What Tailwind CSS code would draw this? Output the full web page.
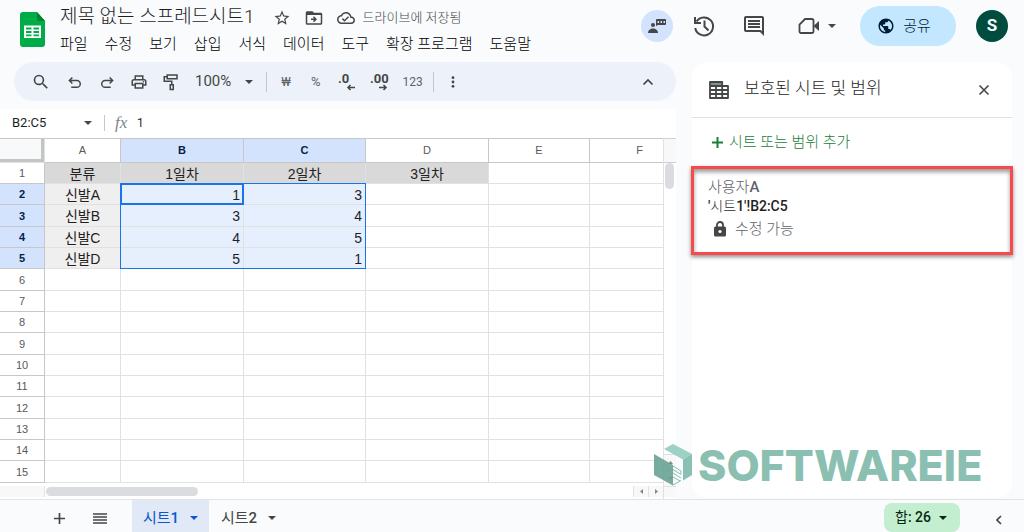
<!DOCTYPE html>
<html lang="ko">
<head>
<meta charset="utf-8">
<meta name="viewport" content="width=device-width, initial-scale=1">
<title>제목 없는 스프레드시트1</title>
<script src="https://cdn.jsdelivr.net/npm/@tailwindcss/browser@4"></script>
</head>
<body class="flex h-screen flex-col overflow-hidden bg-[#f9fbfd] font-['Roboto','Noto_Sans_CJK_KR',sans-serif] text-[#444746]">

<header class="flex h-[62px] shrink-0 items-start pl-5 pr-4">
  <a href="#" aria-label="스프레드시트 홈" class="mt-3 shrink-0">
    <svg class="h-[35px] w-[25px]" viewBox="0 0 25 35"><path fill="#00ac47" d="M3 0h14l8 9v23a3 3 0 0 1-3 3H3a3 3 0 0 1-3-3V3a3 3 0 0 1 3-3z"/><path fill="#00832d" d="M17 0l8 9h-6a2 2 0 0 1-2-2z"/><path fill="#fff" fill-rule="evenodd" d="M4 13.500h17v12.500H4zM6 15.500v2h5.500v-2zm7.500 0v2H19v-2zM6 19v2h5.500v-2zm7.500 0v2H19v-2zM6 22.500v1.700h5.500v-1.700zm7.500 0v1.700H19v-1.700z"/></svg>
  </a>
  <div class="flex flex-col pl-[15px]">
    <div class="flex h-8 items-center">
      <h1 class="whitespace-nowrap pt-[2px] text-[19px] font-light leading-8 text-[#1f1f1f]">제목 없는 스프레드시트1</h1>
      <div class="flex items-center gap-[14px] pl-[18px] pt-1">
        <button aria-label="별표"><svg class="size-[18px]" viewBox="0 0 24 24" fill="currentColor"><path d="M22 9.240l-7.190-.62L12 2 9.190 8.630 2 9.240l5.460 4.730L5.820 21 12 17.270 18.180 21l-1.630-7.030L22 9.240zM12 15.400l-3.760 2.270 1-4.280-3.320-2.880 4.380-.38L12 6.100l1.710 4.040 4.380.38-3.320 2.880 1 4.280L12 15.400z"/></svg></button>
        <button aria-label="이동"><svg class="size-[18px]" viewBox="0 0 24 24" fill="currentColor"><path d="M21 5h-9l-2-2H3c-1.100 0-2 .9-2 2v14c0 1.100.9 2 2 2h18c1.100 0 2-.9 2-2V7c0-1.100-.9-2-2-2zm0 14H3V8h18v11zm-9-1.500l4-4-4-4-1.400 1.400 1.600 1.600H8v2h4.200l-1.600 1.600z"/></svg></button>
        <button class="flex items-center gap-2 whitespace-nowrap text-[13px] font-light"><svg class="size-[18px]" viewBox="0 0 24 24" fill="currentColor"><path d="M19.350 10.040C18.670 6.590 15.640 4 12 4 9.110 4 6.600 5.640 5.350 8.040 2.340 8.360 0 10.910 0 14c0 3.310 2.690 6 6 6h13c2.760 0 5-2.240 5-5 0-2.640-2.050-4.780-4.650-4.960zM19 18H6c-2.210 0-4-1.790-4-4 0-2.050 1.530-3.760 3.560-3.970l1.070-.11.5-.95C8.080 7.140 9.940 6 12 6c2.620 0 4.880 1.860 5.390 4.430l.3 1.500 1.530.11c1.560.1 2.780 1.410 2.780 2.960 0 1.650-1.350 3-3 3zm-9-3.820l-2.090-2.090L6.500 13.500 10 17l6.010-6.010-1.410-1.410z"/></svg>드라이브에 저장됨</button>
      </div>
    </div>
    <nav class="flex h-6 items-center gap-[17px] whitespace-nowrap text-[15px] font-light text-black">
      <button>파일</button><button>수정</button><button>보기</button><button>삽입</button><button>서식</button><button>데이터</button><button>도구</button><button>확장 프로그램</button><button>도움말</button>
    </nav>
  </div>
  <div class="ml-auto flex items-center pt-[6px]">
    <button aria-label="접속자" class="flex size-8 items-center justify-center rounded-full bg-[#d3e3fd]">
      <svg class="h-4 w-5" viewBox="0 0 20 16" fill="currentColor"><circle cx="6" cy="7" r="2"/><path d="M1 15c0-3 2.500-4.500 5-4.500s5 1.500 5 4.500z"/><path fill-rule="evenodd" d="M10 1h8a1 1 0 0 1 1 1v4a1 1 0 0 1-1 1h-7l-2 1V2a1 1 0 0 1 1-1zM10.500 3v2h1.500V3zm3 0v2H15V3zm3 0v2H18V3z"/></svg>
    </button>
    <button aria-label="기록" class="ml-[19px]"><svg class="size-6" viewBox="0 0 24 24" fill="none" stroke="currentColor" stroke-width="2"><path d="M4.500 7.500A9 9 0 1 1 3.200 14M3 3v6h6M12.500 6.500v6l4 4"/></svg></button>
    <button aria-label="댓글" class="ml-[26px]"><svg class="size-6" viewBox="0 0 24 24" fill="currentColor"><path d="M22 4c0-1.100-.9-2-2-2H4c-1.100 0-2 .9-2 2v12c0 1.100.9 2 2 2h14l4 4V4zm-2 13.200L18.800 16H4V4h16v13.200zM6 12h12v2H6zm0-3h12v2H6zm0-3h12v2H6z"/></svg></button>
    <button aria-label="화상 회의" class="ml-8 flex items-center gap-2"><svg class="h-5 w-[22px]" viewBox="0 0 22 20" fill="none" stroke="currentColor" stroke-width="1.800"><path d="M7 3h7a1.500 1.500 0 0 1 1.500 1.500v11a1.500 1.500 0 0 1-1.500 1.500H3a1.500 1.500 0 0 1-1.500-1.500V8.500z"/><path d="M15.500 10l5.500-5v10z" fill="currentColor" stroke="none"/></svg><svg class="h-1 w-2" viewBox="0 0 8 4" fill="currentColor"><path d="M0 0h8L4 4z"/></svg></button>
    <button class="ml-6 flex h-10 w-24 items-center justify-center gap-2 rounded-full bg-[#c2e7ff] pr-2 text-[15px] font-light text-[#001d35]"><svg class="size-[18px]" viewBox="0 0 24 24" fill="currentColor"><path d="M12 2C6.480 2 2 6.480 2 12s4.480 10 10 10 10-4.480 10-10S17.520 2 12 2zm-1 17.930c-3.950-.49-7-3.850-7-7.930 0-.62.080-1.210.21-1.790L9 15v1c0 1.100.9 2 2 2v1.930zm6.900-2.540c-.26-.81-1-1.390-1.900-1.390h-1v-3c0-.55-.45-1-1-1H8v-2h2c.55 0 1-.45 1-1V7h2c1.100 0 2-.9 2-2v-.41c2.930 1.190 5 4.060 5 7.410 0 2.080-.8 3.970-2.100 5.390z"/></svg>공유</button>
    <button aria-label="계정" class="ml-5 size-8 rounded-full bg-[#004d40] text-[17px] font-bold text-white">S</button>
  </div>
</header>

<main class="flex min-h-0 flex-1 gap-4 pr-3">
  <section class="flex min-w-0 flex-1 flex-col">
    <div class="ml-[14px] flex h-[39px] shrink-0 items-center rounded-full bg-[#edf2fa] pl-[18px] pr-5">
      <button aria-label="검색"><svg class="size-[18px]" viewBox="0 0 24 24" fill="currentColor"><path d="M15.500 14h-.79l-.28-.27A6.470 6.470 0 0 0 16 9.500 6.500 6.500 0 1 0 9.500 16c1.610 0 3.090-.59 4.230-1.570l.27.28v.79l5 5L20.500 19l-5-5zm-6 0a4.500 4.500 0 1 1 0-9 4.500 4.500 0 0 1 0 9z" transform="translate(-1 -1) scale(1.080)"/></svg></button>
      <button aria-label="실행취소" class="ml-4"><svg class="size-[18px]" viewBox="0 0 24 24" fill="none" stroke="currentColor" stroke-width="2"><path d="M8.500 6L4.500 10l4 4M4.500 10H14.500a4.500 4.500 0 0 1 0 9H7"/></svg></button>
      <button aria-label="재실행" class="ml-[14px]"><svg class="size-[18px]" viewBox="0 0 24 24" fill="none" stroke="currentColor" stroke-width="2"><path d="M15.500 6l4 4-4 4M19.500 10H9.500a4.500 4.500 0 0 0 0 9H17"/></svg></button>
      <button aria-label="인쇄" class="ml-[14px]"><svg class="size-[18px]" viewBox="0 0 24 24" fill="currentColor"><path d="M19 8h-1V3H6v5H5c-1.660 0-3 1.340-3 3v6h4v4h12v-4h4v-6c0-1.660-1.340-3-3-3zM8 5h8v3H8V5zm8 14H8v-4h8v4zm2-4v-2H6v2H4v-4c0-.55.45-1 1-1h14c.55 0 1 .45 1 1v4h-2z"/><circle cx="18" cy="11.500" r="1"/></svg></button>
      <button aria-label="서식 복사" class="ml-[14px]"><svg class="size-[18px]" viewBox="0 0 24 24" fill="none" stroke="currentColor" stroke-width="2"><path d="M7 2.500h13v5H7zM7 5H3v6h10v4M11 15.500h4V22h-4z"/></svg></button>
      <button class="ml-[15px] flex items-center gap-[14px] text-[15px]">100% <svg class="h-1 w-2" viewBox="0 0 8 4" fill="currentColor"><path d="M0 0h8L4 4z"/></svg></button>
      <span class="ml-[13px] h-5 w-px bg-[#c7c7c7]"></span>
      <button aria-label="통화 형식" class="ml-[14px] text-[13px] text-[#5f6368]">₩</button>
      <button aria-label="퍼센트 형식" class="ml-5 text-[13px] text-[#5f6368]">%</button>
      <button aria-label="소수점 이하 자릿수 감소" class="ml-[18px]"><svg class="h-5 w-[18px]" viewBox="0 0 18 20"><text x="0" y="11" font-size="13" font-weight="700" fill="currentColor">.0</text><path d="M17 15.500h-7M12.500 13l-2.500 2.500 2.500 2.500" fill="none" stroke="currentColor" stroke-width="1.500"/></svg></button>
      <button aria-label="소수점 이하 자릿수 증가" class="ml-[14px]"><svg class="h-5 w-[19px]" viewBox="0 0 19 20"><text x="0" y="11" font-size="13" font-weight="700" fill="currentColor">.00</text><path d="M9 15.500h7M13.500 13l2.500 2.500-2.500 2.500" fill="none" stroke="currentColor" stroke-width="1.500"/></svg></button>
      <button class="ml-[13px] text-[12px] text-[#5f6368]">123</button>
      <span class="ml-[10px] h-5 w-px bg-[#c7c7c7]"></span>
      <button aria-label="더보기" class="ml-[17px]"><svg class="h-3 w-1" viewBox="0 0 4 12" fill="currentColor"><circle cx="2" cy="1.700" r="1.400"/><circle cx="2" cy="6" r="1.400"/><circle cx="2" cy="10.300" r="1.400"/></svg></button>
      <button aria-label="메뉴 숨기기" class="ml-auto"><svg class="h-4 w-4" viewBox="0 0 16 16" fill="none" stroke="currentColor" stroke-width="1.700"><path d="M3.500 10.500L8 6l4.500 4.500"/></svg></button>
    </div>

    <div class="mt-2 flex h-[29px] shrink-0 items-center bg-white pl-3 pb-[2px] text-[#1f1f1f]">
      <input aria-label="이름 상자" value="B2:C5" class="w-[72px] text-[13px] outline-none">
      <button aria-label="범위 목록"><svg class="h-1 w-2" viewBox="0 0 8 4" fill="#444746"><path d="M0 0h8L4 4z"/></svg></button>
      <span class="ml-3 h-4 w-px bg-[#c7c7c7]"></span>
      <label for="formula" class="ml-[10px] w-[22px] font-['Liberation_Serif',serif] text-[17px] italic text-[#80868b]">fx</label>
      <input id="formula" value="1" class="min-w-0 flex-1 text-[12px] outline-none">
    </div>

    <div class="flex min-h-0 flex-1 bg-white">
      <div class="flex min-w-0 flex-1 flex-col">
        <div class="relative min-h-0 flex-1 overflow-hidden">
          <table class="w-[690px] table-fixed border-separate border-spacing-0 border-t border-[#c7c7c7] text-center font-['Liberation_Sans','Noto_Sans_CJK_KR',sans-serif] text-[14px] leading-4 text-[#1f1f1f] [&_td]:border-b [&_td]:border-r [&_td]:border-[#e1e1e1] [&_td]:p-0 [&_th]:border-b [&_th]:border-r [&_th]:border-[#c7c7c7] [&_th]:p-0 [&_th]:text-[11px] [&_tbody_th]:font-normal">
            <colgroup><col class="w-[45px]"><col class="w-[76px]"><col class="w-[123px]"><col class="w-[122px]"><col class="w-[123px]"><col class="w-[101px]"><col></colgroup>
            <thead><tr class="h-6 text-[#575a5a] [&>th]:pb-[2px] [&>th]:font-normal">
              <td class="bg-[#f8f9fa] shadow-[inset_-3px_-3px_#c4c4c4]"></td><th scope="col">A</th><th scope="col" class="bg-[#d3e3fd] text-[#041e49]"><b class="font-bold">B</b></th><th scope="col" class="bg-[#d3e3fd] text-[#041e49]"><b class="font-bold">C</b></th><th scope="col">D</th><th scope="col">E</th><th scope="col">F</th>
            </tr></thead>
            <tbody class="[&>tr]:h-[21px] [&>tr:nth-child(3n)]:h-[22px] [&_td]:pt-px [&_th]:text-[#575a5a]">
              <tr><th scope="row">1</th><td class="bg-[#d9d9d9]">분류</td><td class="bg-[#d9d9d9]">1일차</td><td class="bg-[#d9d9d9]">2일차</td><td class="bg-[#d9d9d9]">3일차</td><td></td><td></td></tr>
              <tr><th scope="row" class="bg-[#d3e3fd]"><b class="font-bold text-[#041e49]">2</b></th><td class="bg-[#efefef]">신발A</td><td class="bg-[#e6effd] text-right"><span class="pr-[3px]">1</span></td><td class="bg-[#e6effd] text-right"><span class="pr-[3px]">3</span></td><td></td><td></td><td></td></tr>
              <tr><th scope="row" class="bg-[#d3e3fd]"><b class="font-bold text-[#041e49]">3</b></th><td class="bg-[#efefef]">신발B</td><td class="bg-[#e6effd] text-right"><span class="pr-[3px]">3</span></td><td class="bg-[#e6effd] text-right"><span class="pr-[3px]">4</span></td><td></td><td></td><td></td></tr>
              <tr><th scope="row" class="bg-[#d3e3fd]"><b class="font-bold text-[#041e49]">4</b></th><td class="bg-[#efefef]">신발C</td><td class="bg-[#e6effd] text-right"><span class="pr-[3px]">4</span></td><td class="bg-[#e6effd] text-right"><span class="pr-[3px]">5</span></td><td></td><td></td><td></td></tr>
              <tr><th scope="row" class="bg-[#d3e3fd]"><b class="font-bold text-[#041e49]">5</b></th><td class="bg-[#efefef]">신발D</td><td class="bg-[#e6effd] text-right"><span class="pr-[3px]">5</span></td><td class="bg-[#e6effd] text-right"><span class="pr-[3px]">1</span></td><td></td><td></td><td></td></tr>
              <tr><th scope="row">6</th><td></td><td></td><td></td><td></td><td></td><td></td></tr>
              <tr><th scope="row">7</th><td></td><td></td><td></td><td></td><td></td><td></td></tr>
              <tr><th scope="row">8</th><td></td><td></td><td></td><td></td><td></td><td></td></tr>
              <tr><th scope="row">9</th><td></td><td></td><td></td><td></td><td></td><td></td></tr>
              <tr><th scope="row">10</th><td></td><td></td><td></td><td></td><td></td><td></td></tr>
              <tr><th scope="row">11</th><td></td><td></td><td></td><td></td><td></td><td></td></tr>
              <tr><th scope="row">12</th><td></td><td></td><td></td><td></td><td></td><td></td></tr>
              <tr><th scope="row">13</th><td></td><td></td><td></td><td></td><td></td><td></td></tr>
              <tr><th scope="row">14</th><td></td><td></td><td></td><td></td><td></td><td></td></tr>
              <tr><th scope="row">15</th><td></td><td></td><td></td><td></td><td></td><td></td></tr>
            </tbody>
          </table>
          <div class="absolute left-[120px] top-[45px] h-[86px] w-[246px] border border-[#1a73e8]"></div>
          <div class="absolute left-[120px] top-[45px] h-[22px] w-[124px] border-2 border-[#1a73e8]"></div>
        </div>
        <div class="flex h-[13px] shrink-0 items-center pb-[2px]">
          <span class="h-full w-[45px] border-r border-[#e1e1e1] bg-[#f8f8f8]"></span>
          <span class="ml-px h-[9px] w-[152px] rounded-full bg-[#dadce0]"></span>
          <div class="ml-auto flex h-full text-[#80868b]">
            <button aria-label="왼쪽으로" class="flex w-4 items-center justify-center border-x border-[#e1e1e1] bg-[#f8f8f8]"><svg class="h-[5px] w-[3px]" viewBox="0 0 3 5" fill="currentColor"><path d="M3 0v5L0 2.500z"/></svg></button>
            <button aria-label="오른쪽으로" class="flex w-[14px] items-center justify-center bg-[#f8f8f8]"><svg class="h-[5px] w-[3px]" viewBox="0 0 3 5" fill="currentColor"><path d="M0 0v5l3-2.500z"/></svg></button>
          </div>
        </div>
      </div>
      <div class="flex w-[13px] shrink-0 flex-col items-center border-l border-[#e1e1e1]">
        <span class="h-[25px] w-full border-y border-[#d0d0d0] bg-[#f8f8f8]"></span>
        <span class="mr-[2px] h-[26px] w-[9px] rounded-full bg-[#dadce0]"></span>
        <div class="mt-auto flex w-full flex-col pb-[2px] text-[#80868b]">
          <button aria-label="위로" class="flex h-4 items-center justify-center border-t border-[#e1e1e1] bg-[#f8f8f8]"><svg class="h-[3px] w-[5px]" viewBox="0 0 5 3" fill="currentColor"><path d="M0 3h5L2.500 0z"/></svg></button>
          <button aria-label="아래로" class="flex h-4 items-center justify-center border-t border-[#e1e1e1] bg-[#f8f8f8]"><svg class="h-[3px] w-[5px]" viewBox="0 0 5 3" fill="currentColor"><path d="M0 0h5L2.500 3z"/></svg></button>
          <span class="h-[11px] border-t border-[#e1e1e1] bg-[#f8f8f8]"></span>
        </div>
      </div>
    </div>
  </section>

  <aside class="relative mb-px flex w-80 shrink-0 flex-col rounded-2xl bg-white">
    <div class="flex h-14 shrink-0 items-center border-b border-[#e1e1e1] pl-[17px] pr-[22px]">
      <svg class="h-[18px] w-5" viewBox="0 0 20 18" fill="none" stroke="currentColor" stroke-width="1.800"><path d="M1 1h12v3H1z" fill="#7b9484" stroke="none"/><path d="M1 1h12.200M1 5h18M1 9h18M1 13h18M1 17h18M1 .2v17.600M7 5v12M13.200.2V17M19 4.200v13.600"/></svg>
      <h2 class="ml-[15px] pb-[2px] text-[17px] font-light text-[#1f1f1f]">보호된 시트 및 범위</h2>
      <button aria-label="닫기" class="ml-auto"><svg class="size-3" viewBox="0 0 12 12" fill="none" stroke="currentColor" stroke-width="1.600"><path d="M1.500 1.500l9 9M10.500 1.500l-9 9"/></svg></button>
    </div>
    <button class="ml-5 flex h-12 shrink-0 items-center gap-[6px] self-start text-[15px] font-light text-[#188038]"><svg class="size-[11px]" viewBox="0 0 11 11" stroke="currentColor" stroke-width="2"><path d="M5.500 0v11M0 5.500h11"/></svg>시트 또는 범위 추가</button>
    <div class="-mx-px h-[89px] shrink-0 border-[3px] border-[#f84a4a] pl-[14px] pt-[9px] text-[14px] leading-[19px] text-[#5f6368] shadow-[0_2px_4px_rgba(0,0,0,0.45),inset_0_3px_4px_rgba(0,0,0,0.4)]">
      <p class="text-[15px] font-light">사용자<b class="font-medium">A</b></p>
      <p class="font-medium text-[#1f1f1f]">'<span class="font-light">시트</span>1'!B2:C5</p>
      <p class="flex h-[26px] items-center gap-[9px] pl-[6px] text-[15px] font-light"><svg class="h-4 w-3" viewBox="0 0 12 16" fill="none"><path d="M3 6V4a3 3 0 0 1 6 0v2" stroke="#444746" stroke-width="1.800"/><rect y="5.500" width="12" height="10" rx="1.500" fill="#444746"/><circle cx="6" cy="10.500" r="1.600" fill="#fff"/></svg>수정 가능</p>
    </div>
    <div class="absolute bottom-2 -left-[38px] flex items-center gap-[6px] whitespace-nowrap font-['Inter',sans-serif] text-[43px] font-extrabold leading-[50px] text-[#8abfb2]">
      <svg class="h-[42px] w-[38px] opacity-90" viewBox="0 0 38 42"><path fill="#92cdbf" d="M10 5L19 0l19 10-9 5.500z"/><path fill="#6aa395" d="M0 10l19 11v20.500L0 31z"/><path fill="#7eb9ab" d="M38 10v21l-9 5.500V15.500z"/><path fill="none" stroke="#7eb9ab" d="M19 22l8 5v3M19 25.500l8 5M19 29l8 5M19 33l7 4M19 41l8-4.500"/></svg>
      <span>SOFTWAREIE</span>
    </div>
  </aside>
</main>

<footer class="flex h-[33px] shrink-0 items-center border-t border-[#e1e3e6] pr-[22px]">
  <button aria-label="시트 추가" class="ml-[54px] mt-1"><svg class="size-[11px]" viewBox="0 0 11 11" stroke="currentColor" stroke-width="1.700"><path d="M5.500 0v11M0 5.500h11"/></svg></button>
  <button aria-label="모든 시트" class="ml-7 mt-1"><svg class="h-[11px] w-[14px]" viewBox="0 0 14 11" stroke="currentColor" stroke-width="1.500"><path d="M0 1h14M0 4h14M0 7h14M0 10h14"/></svg></button>
  <button class="ml-[25px] flex h-full w-[77px] items-center justify-center gap-[11px] bg-[#e1e9f7] pt-1 text-[15px] font-medium text-[#0b57d0]"><span><span class="font-normal">시트</span>1</span> <svg class="h-1 w-2" viewBox="0 0 8 4" fill="currentColor"><path d="M0 0h8L4 4z"/></svg></button>
  <button class="ml-3 flex h-full items-center gap-[11px] pt-1 text-[15px] font-medium"><span><span class="font-normal">시트</span>2</span> <svg class="h-1 w-2" viewBox="0 0 8 4" fill="currentColor"><path d="M0 0h8L4 4z"/></svg></button>
  <button class="ml-auto mt-[3px] flex h-[29px] w-[76px] items-center justify-center gap-2 self-start rounded-lg bg-[#c4eed0] pr-[2px] text-[14px] font-medium text-[#072711]"><span><span class="font-normal">합</span>: 26</span> <svg class="h-1 w-2" viewBox="0 0 8 4" fill="currentColor"><path d="M0 0h8L4 4z"/></svg></button>
  <button aria-label="측면 패널 표시" class="ml-9 mt-2"><svg class="h-[10px] w-[6px]" viewBox="0 0 6 10" fill="none" stroke="currentColor" stroke-width="1.700"><path d="M5 1L1 5l4 4"/></svg></button>
</footer>
</body>
</html>
